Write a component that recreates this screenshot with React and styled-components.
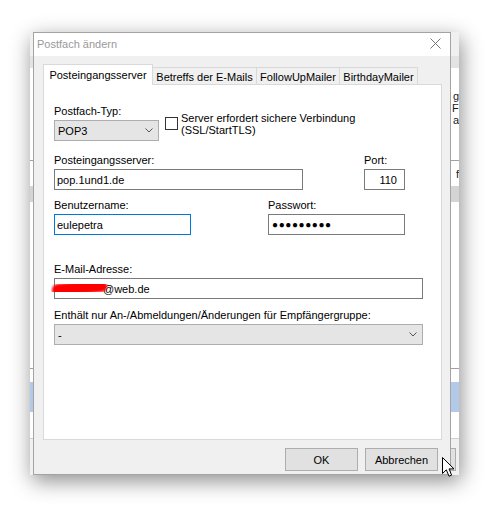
import React from 'react';
import styled, { createGlobalStyle } from 'styled-components';

const GlobalStyle = createGlobalStyle`
  html, body {
    margin: 0;
    padding: 0;
    background: #fff;
  }
  body {
    font-family: "Liberation Sans", Arial, sans-serif;
    font-size: 11px;
    color: #000;
  }
  * { box-sizing: border-box; }
`;

const Screen = styled.div`
  position: relative;
  width: 490px;
  height: 506px;
  padding: 32px 0 0 30px;
  background: #fff;
  overflow: hidden;
`;

const BackWindow = styled.div`
  display: flex;
  width: 429px;
  height: 443px;
  background: #fff;
  box-shadow: 2px 6px 20px rgba(0, 0, 0, 0.45);
`;

const Strip = styled.div`
  display: flex;
  flex-direction: column;
  width: ${p => p.$w}px;
  overflow: hidden;
  background: #fff;
`;

const Band = styled.div`
  flex: ${p => (p.$h ? `0 0 ${p.$h}px` : '1')};
  background: ${p => p.$bg || '#fff'};
  padding-top: ${p => p.$pt || 0}px;
  position: relative;
`;

const StripText = styled.div`
  display: flex;
  justify-content: ${p => (p.$right ? 'flex-end' : 'flex-start')};
  height: 12px;
  line-height: 12px;
  white-space: nowrap;
  font-size: 11px;
  padding-left: ${p => p.$indent || 0}px;
  color: #1a1a1a;
`;

const StripButton = styled.div`
  margin: 9px 3px 0 -10px;
  height: 23px;
  border: 1px solid #adadad;
  background: #e1e1e1;
`;

const Dialog = styled.div`
  display: flex;
  flex-direction: column;
  width: 418px;
  height: 443px;
  border: 1px solid #a3a3a3;
  background: #f0f0f0;
`;

const TitleBar = styled.div`
  display: flex;
  align-items: center;
  justify-content: space-between;
  height: 23px;
  padding: 0 9px 2px 3px;
  background: #fff;
`;

const Title = styled.span`
  color: #999;
  font-size: 11px;
`;

const Body = styled.div`
  flex: 1;
  display: flex;
  flex-direction: column;
  padding: 8px 8px 3px 9px;
`;

const TabList = styled.div`
  position: relative;
  z-index: 1;
  display: flex;
  align-items: flex-end;
  height: 21px;
  margin-bottom: -1px;
`;

const Tab = styled.div`
  display: flex;
  align-items: center;
  justify-content: center;
  width: ${p => p.$w}px;
  height: ${p => (p.$active ? 21 : 17)}px;
  margin-bottom: ${p => (p.$active ? 0 : 1)}px;
  margin-left: ${p => (p.$first ? 0 : -1)}px;
  padding-top: ${p => (p.$active ? 0 : 1)}px;
  border: 1px solid #d9d9d9;
  border-bottom: none;
  background: ${p => (p.$active ? '#fff' : '#f0f0f0')};
  white-space: nowrap;
`;

const Panel = styled.div`
  height: 356px;
  padding: 20px 10px 0 10px;
  background: #fff;
  border: 1px solid #d9d9d9;
`;

const Row = styled.div`
  display: flex;
  align-items: flex-start;
  gap: ${p => p.$gap || 0}px;
  margin-top: ${p => p.$mt || 0}px;
`;

const Field = styled.div`
  display: flex;
  flex-direction: column;
  width: ${p => p.$w}px;
`;

const Label = styled.div`
  height: 13px;
  line-height: 13px;
  margin-bottom: 2px;
  white-space: nowrap;
`;

const TextBox = styled.div`
  position: relative;
  display: flex;
  align-items: center;
  justify-content: ${p => (p.$right ? 'flex-end' : 'flex-start')};
  height: 21px;
  padding: ${p => (p.$right ? '0 7px 0 2px' : '0 2px')};
  background: #fff;
  border: 1px solid ${p => (p.$focused ? '#0078d7' : '#7a7a7a')};
  white-space: nowrap;
`;

const Select = styled.div`
  display: flex;
  align-items: center;
  justify-content: space-between;
  height: 21px;
  padding: 0 5px 0 3px;
  background: #e5e5e5;
  border: 1px solid #adadad;
`;

const CheckGroup = styled.label`
  display: flex;
  align-items: flex-start;
  gap: 3px;
  margin: 7px 0 0 6px;
`;

const CheckBox = styled.span`
  width: 13px;
  height: 13px;
  margin-top: 5px;
  border: 1px solid #333;
  background: #fff;
  flex: none;
`;

const CheckText = styled.span`
  line-height: 12px;
`;

const Dots = styled.span`
  padding-left: 1px;
  font-size: 10px;
  letter-spacing: 0.6px;
`;

const Redacted = styled.span`
  position: relative;
  display: inline-block;
  flex: none;
  width: 46px;
  height: 17px;
`;

const Scribble = styled.svg`
  position: absolute;
  left: -6px;
  top: -4px;
`;

const ButtonRow = styled.div`
  display: flex;
  justify-content: flex-end;
  gap: 7px;
  margin-top: 8px;
  padding-right: 4px;
`;

const Button = styled.button`
  width: 73px;
  height: 23px;
  padding: 0;
  font-family: inherit;
  font-size: 11px;
  color: #000;
  background: #e1e1e1;
  border: 1px solid #adadad;
`;

const Cursor = styled.svg`
  position: absolute;
  left: 441px;
  top: 456px;
`;

const Chevron = () => (
  <svg width="8" height="5" viewBox="0 0 8 5">
    <polyline points="0.5,0.5 4,4 7.5,0.5" fill="none" stroke="#555" strokeWidth="1" />
  </svg>
);

const CloseIcon = () => (
  <svg width="11" height="11" viewBox="0 0 11 11">
    <path d="M0.5 0.5 L10.5 10.5 M10.5 0.5 L0.5 10.5" stroke="#777" strokeWidth="1" />
  </svg>
);

const BackBands = ({ text }) => (
  <>
    <Band $h={24} $bg="#f0f0f0" />
    <Band $h={12} $bg="#e3e3e3" />
    <Band $h={92} $pt={22}>
      {text && (
        <>
          <StripText $right>g</StripText>
          <StripText $indent={1}>F</StripText>
          <StripText $indent={2}>a</StripText>
        </>
      )}
    </Band>
    <Band $h={1} $bg="#a0a0a0" />
    <Band $h={25} $pt={7}>
      {text && <StripText $right>f</StripText>}
    </Band>
    <Band $h={16} $bg="#d4d4d4" />
    <Band $h={166} />
    <Band $h={1} $bg="#a0a0a0" />
    <Band $h={13} />
    <Band $h={30} $bg="#b3c9e8" />
    <Band $h={26} />
    <Band $h={1} $bg="#cfcfcf" />
    <Band $bg="#f0f0f0">{text && <StripButton />}</Band>
  </>
);

const tabs = [
  { label: 'Posteingangsserver', w: 110, active: true },
  { label: 'Betreffs der E-Mails', w: 105 },
  { label: 'FollowUpMailer', w: 84 },
  { label: 'BirthdayMailer', w: 79 },
];

export default function App() {
  return (
    <Screen>
      <GlobalStyle />
      <BackWindow>
        <Strip $w={3}>
          <BackBands />
        </Strip>
        <Dialog>
          <TitleBar>
            <Title>Postfach ändern</Title>
            <CloseIcon />
          </TitleBar>
          <Body>
            <TabList>
              {tabs.map((t, i) => (
                <Tab key={t.label} $w={t.w} $active={t.active} $first={i === 0}>
                  {t.label}
                </Tab>
              ))}
            </TabList>
            <Panel>
              <Row>
                <Field $w={105}>
                  <Label>Postfach-Typ:</Label>
                  <Select>
                    <span>POP3</span>
                    <Chevron />
                  </Select>
                </Field>
                <CheckGroup>
                  <CheckBox />
                  <CheckText>
                    Server erfordert sichere Verbindung
                    <br />
                    (SSL/StartTLS)
                  </CheckText>
                </CheckGroup>
              </Row>
              <Row $mt={13} $gap={61}>
                <Field $w={249}>
                  <Label>Posteingangsserver:</Label>
                  <TextBox>pop.1und1.de</TextBox>
                </Field>
                <Field $w={41}>
                  <Label>Port:</Label>
                  <TextBox $right>110</TextBox>
                </Field>
              </Row>
              <Row $mt={9} $gap={77}>
                <Field $w={137}>
                  <Label>Benutzername:</Label>
                  <TextBox $focused>eulepetra</TextBox>
                </Field>
                <Field $w={137}>
                  <Label>Passwort:</Label>
                  <TextBox>
                    <Dots>●●●●●●●●●</Dots>
                  </TextBox>
                </Field>
              </Row>
              <Row $mt={28}>
                <Field $w={369}>
                  <Label>E-Mail-Adresse:</Label>
                  <TextBox>
                    <Redacted>
                      <Scribble width="58" height="26" viewBox="0 0 58 26">
                        <defs>
                          <filter id="soft" x="-20%" y="-50%" width="140%" height="200%">
                            <feGaussianBlur stdDeviation="1" />
                          </filter>
                        </defs>
                        <path
                          d="M7 14 Q 26 12 50 10"
                          fill="none"
                          stroke="#f00"
                          strokeWidth="12"
                          strokeLinecap="round"
                          filter="url(#soft)"
                        />
                      </Scribble>
                    </Redacted>
                    @web.de
                  </TextBox>
                </Field>
              </Row>
              <Row $mt={10}>
                <Field $w={369}>
                  <Label>Enthält nur An-/Abmeldungen/Änderungen für Empfängergruppe:</Label>
                  <Select>
                    <span>-</span>
                    <Chevron />
                  </Select>
                </Field>
              </Row>
            </Panel>
            <ButtonRow>
              <Button>OK</Button>
              <Button>Abbrechen</Button>
            </ButtonRow>
          </Body>
        </Dialog>
        <Strip $w={8}>
          <BackBands text />
        </Strip>
      </BackWindow>
      <Cursor width="14" height="22" viewBox="0 0 14 22">
        <path
          d="M1.5 1.5 L1.5 17.5 L5.3 13.8 L8 20.2 L10.6 19.1 L8 12.9 L13 12.9 Z"
          fill="#fff"
          stroke="#000"
          strokeWidth="1"
          strokeLinejoin="miter"
        />
      </Cursor>
    </Screen>
  );
}
